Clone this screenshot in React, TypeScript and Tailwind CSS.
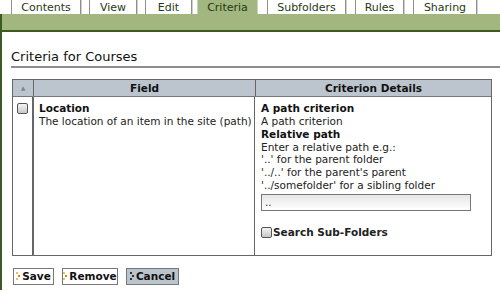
import React from "react";

const tabs = [
  { label: "Contents", w: 70, ml: 11 },
  { label: "View", w: 48, ml: 8 },
  { label: "Edit", w: 47, ml: 8 },
  { label: "Criteria", w: 61, ml: 5, active: true },
  { label: "Subfolders", w: 79, ml: 9 },
  { label: "Rules", w: 49, ml: 9 },
  { label: "Sharing", w: 64, ml: 9 },
];

function Dots({ dark }: { dark?: boolean }) {
  const c1 = dark ? "#223344" : "#c98a1a";
  const c2 = dark ? "#223344" : "#e8c060";
  return (
    <svg width="5" height="9" viewBox="0 0 5 9" className="mr-[1px]">
      <rect x="0" y="0" width="2" height="2" fill={c2} />
      <rect x="2" y="3" width="2" height="2" fill={c1} />
      <rect x="0" y="6" width="2" height="2" fill={c2} />
    </svg>
  );
}

function Check() {
  return (
    <div className="w-[11px] h-[11px] border border-[#555] rounded-[2px] bg-gradient-to-b from-[#f4f4f4] to-[#c8c8c8]" />
  );
}

export default function App() {
  return (
    <div
      className="w-[500px] h-[290px] bg-white overflow-hidden text-[#111]"
      style={{ fontFamily: '"DejaVu Sans", "Liberation Sans", sans-serif' }}
    >
      <div className="flex h-[14px] items-stretch">
        {tabs.map((t) => (
          <div
            key={t.label}
            style={{ width: t.w, marginLeft: t.ml }}
            className={
              t.active
                ? "bg-[#a2b67f] border-l border-r border-[#c8d2b8] flex items-center justify-center text-[11px] text-[#1f3a12] leading-none"
                : "bg-white border-l border-r border-[#8f8f8f] shadow-[1px_0_0_#cfcfcf] flex items-center justify-center text-[11px] text-[#1f3a12] leading-none"
            }
          >
            {t.label}
          </div>
        ))}
      </div>
      <div className="h-[18px] bg-[#a2b67f] border-b-2 border-l-2 border-[#3d5a24]" />
      <div className="border-l-2 border-[#3d5a24] h-[258px] pl-[9px] pt-[18px]">
        <div className="text-[13px] leading-[14px] text-[#111]">Criteria for Courses</div>
        <div className="mt-[2px] h-[2px] bg-[#8c8c8c]" />
        <div className="mt-[11px] ml-[1px] w-[480px] border border-[#666] h-[177px] flex flex-col">
          <div className="flex h-[17px] bg-[#bcc5cd] border-b border-[#777] text-[10.5px] font-bold leading-none">
            <div className="w-[21px] border-r border-[#666] flex items-center justify-center text-[6px] text-[#7b8794] font-normal">
              ▲
            </div>
            <div className="w-[222px] border-r border-[#666] flex items-center justify-center">Field</div>
            <div className="flex-1 flex items-center justify-center">Criterion Details</div>
          </div>
          <div className="flex flex-1 text-[10.5px] leading-[12.6px]">
            <div className="w-[21px] border-r-2 border-[#666] flex justify-center pt-[6px]">
              <Check />
            </div>
            <div className="w-[221px] border-r border-[#666] pl-[5px] pt-[5px]">
              <div className="font-bold">Location</div>
              <div className="text-[#222]">The location of an item in the site (path)</div>
            </div>
            <div className="flex-1 pl-[6px] pt-[5px] text-[#222]">
              <div className="font-bold text-[#111]">A path criterion</div>
              <div>A path criterion</div>
              <div className="font-bold text-[#111] mt-[1px]">Relative path</div>
              <div>Enter a relative path e.g.:</div>
              <div>'..' for the parent folder</div>
              <div>'../..' for the parent's parent</div>
              <div>'../somefolder' for a sibling folder</div>
              <div className="mt-[3px] w-[210px] h-[17px] border border-[#777] bg-gradient-to-b from-[#e6e6e6] to-white pl-[3px] text-[10px] leading-[15px]">
                ..
              </div>
              <div className="mt-[15px] flex items-center">
                <Check />
                <span className="font-bold ml-[1px]">Search Sub-Folders</span>
              </div>
            </div>
          </div>
        </div>
        <div className="mt-[12px] flex gap-[8px] ml-[2px] text-[10.5px] font-bold leading-none">
          <div className="h-[17px] w-[41px] border border-[#777] bg-white flex items-center justify-center">
            <Dots />Save
          </div>
          <div className="h-[17px] w-[56px] border border-[#777] bg-white flex items-center justify-center">
            <Dots />Remove
          </div>
          <div className="h-[17px] w-[53px] border border-[#777] bg-[#b9c4cc] flex items-center justify-center">
            <Dots dark />Cancel
          </div>
        </div>
      </div>
    </div>
  );
}
